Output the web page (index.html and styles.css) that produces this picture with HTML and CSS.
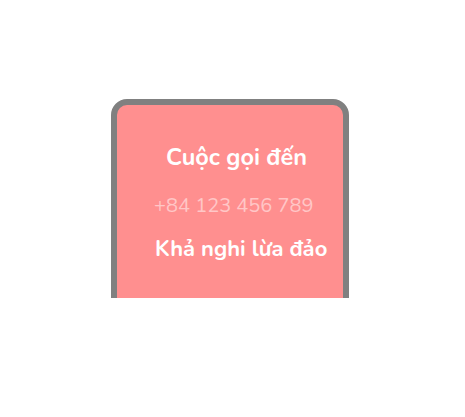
FILE: index.html
```html
<!DOCTYPE html>
<html lang="vi">
<head>
<meta charset="utf-8">
<link rel="stylesheet" href="styles.css">
</head>
<body>
<div class="stage">
  <div class="clip">
    <div class="card">
      <div class="title">Cuộc gọi đến</div>
      <div class="phone">+84 123 456 789</div>
      <div class="warn">Khả nghi lừa đảo</div>
    </div>
  </div>
</div>
</body>
</html>
```
FILE: styles.css
```css
html, body {
  margin: 0;
  padding: 0;
  background: #ffffff;
}
body {
  font-family: "Nunito", "Open Sans", "Noto Sans", sans-serif;
  color: #ffffff;
}
.stage {
  padding-top: 99px;
  padding-left: 111px;
}
.clip {
  width: 238px;
  height: 199px;
  overflow: hidden;
}
.card {
  box-sizing: border-box;
  width: 238px;
  height: 260px;
  border: 6px solid #808080;
  border-radius: 16px;
  background: #ff8f8f;
  display: flex;
  flex-direction: column;
  padding-top: 37px;
}
.title {
  font-size: 23.5px;
  font-weight: 700;
  line-height: 30px;
  margin-left: 49px;
}
.phone {
  font-size: 20px;
  font-weight: 400;
  line-height: 26px;
  margin-top: 21px;
  margin-left: 37px;
  color: rgba(255, 255, 255, 0.5);
}
.warn {
  font-size: 22px;
  font-weight: 700;
  line-height: 28px;
  margin-top: 16px;
  margin-left: 38px;
}
```
